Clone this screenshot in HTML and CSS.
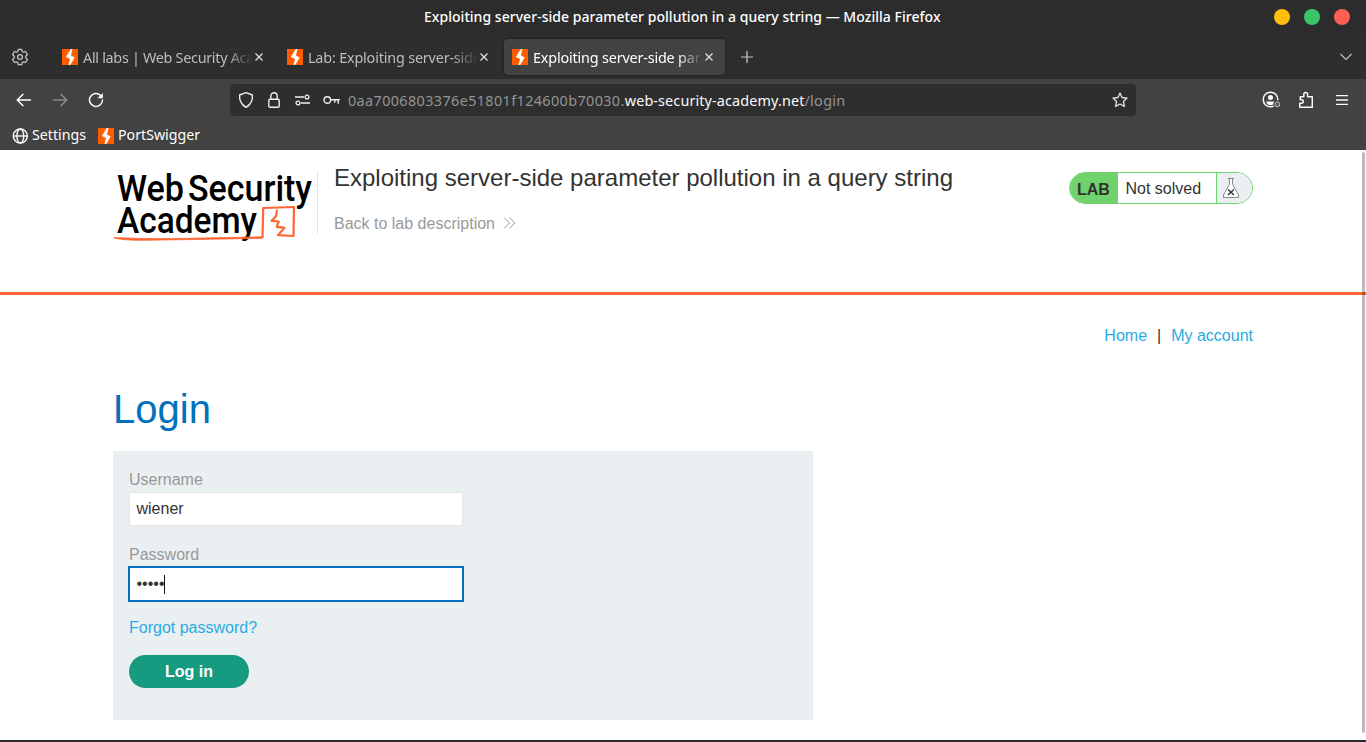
FILE: index.html
```html
<!DOCTYPE html>
<html lang="en">
<head>
<meta charset="utf-8">
<title>Exploiting server-side parameter pollution in a query string</title>
<link rel="stylesheet" href="styles.css">
</head>
<body>
<svg class="defs" width="0" height="0">
  <symbol id="bolt" viewBox="0 0 16 16">
    <rect width="16" height="16" fill="#ff5c00"/>
    <path d="M8.800 0h1.700L9 6.400l3.700 2L8.200 16H6.400l1.700-6L3.800 8z" fill="#fff"/>
  </symbol>
  <symbol id="close" viewBox="0 0 8 8"><path d="M.5.5l7 7M7.500 .5l-7 7" fill="none" stroke="currentColor" stroke-width="1.300"/></symbol>
</svg>

<header class="titlebar">
  <span class="window-title">Exploiting server-side parameter pollution in a query string — Mozilla Firefox</span>
  <div class="window-buttons"><i class="dot yellow"></i><i class="dot green"></i><i class="dot red"></i></div>
</header>

<nav class="tabstrip">
  <svg class="gear" width="18" height="18" viewBox="0 0 18 18" fill="none" stroke="#c4c4c4" stroke-width="1.300" stroke-linejoin="round"><path d="M7.300 1.300h3.400l.5 2.200 1.300.7 2.100-.7 1.800 3-1.600 1.600v1.800l1.600 1.600-1.800 3-2.100-.7-1.300.7-.5 2.200H7.300l-.5-2.200-1.300-.7-2.100.7-1.800-3 1.600-1.600V8.100L1.600 6.500l1.800-3 2.100.7 1.300-.7z"/><circle cx="9" cy="9" r="2.400"/></svg>
  <div class="tab">
    <svg width="16" height="16"><use href="#bolt"/></svg>
    <span class="tab-label tab-one">All labs | Web Security Aca</span>
    <svg class="tab-close" width="8" height="8"><use href="#close"/></svg>
  </div>
  <div class="tab">
    <svg width="16" height="16"><use href="#bolt"/></svg>
    <span class="tab-label">Lab: Exploiting server-side</span>
    <svg class="tab-close" width="8" height="8"><use href="#close"/></svg>
  </div>
  <div class="tab active">
    <svg width="16" height="16"><use href="#bolt"/></svg>
    <span class="tab-label">Exploiting server-side para</span>
    <svg class="tab-close" width="8" height="8"><use href="#close"/></svg>
  </div>
  <svg class="new-tab" width="12" height="12" viewBox="0 0 12 12"><path d="M6 0v12M0 6h12" stroke="#c8c8c8" stroke-width="1.200"/></svg>
  <svg class="all-tabs" width="12" height="8" viewBox="0 0 12 8"><path d="M.5 1 6 6.500 11.500 1" fill="none" stroke="#c0c0c0" stroke-width="1.200"/></svg>
</nav>

<div class="toolbar">
  <svg class="back" width="16" height="14" viewBox="0 0 16 14" fill="none" stroke="#fbfbfb" stroke-width="1.500" stroke-linecap="round"><path d="M1.500 7h13M7 1.300 1.300 7 7 12.700"/></svg>
  <svg class="forward" width="16" height="14" viewBox="0 0 16 14" fill="none" stroke="#8b8b8b" stroke-width="1.500" stroke-linecap="round"><path d="M1.500 7h13M9 1.300 14.700 7 9 12.700"/></svg>
  <svg class="reload" width="16" height="16" viewBox="0 0 16 16"><path d="M12.500 3.200A6.500 6.500 0 1 0 14.500 8" fill="none" stroke="#fbfbfb" stroke-width="1.500" stroke-linecap="round"/><path d="M14.800 1v5.300H9.500z" fill="#fbfbfb"/></svg>
  <div class="urlbar">
    <svg width="16" height="18" viewBox="0 0 16 18" fill="none" stroke="#efefef" stroke-width="1.400" stroke-linejoin="round"><path d="M8 1.600 14.400 4q.7 8-6.400 12.400Q.9 12 1.600 4z"/></svg>
    <svg class="lock" width="12" height="16" viewBox="0 0 12 16" fill="none" stroke="#efefef" stroke-width="1.400"><rect x=".8" y="7.200" width="10.400" height="8" rx="1.300"/><path d="M2.800 7V4a3.200 3.200 0 0 1 6.400 0v3"/></svg>
    <svg width="15" height="12" viewBox="0 0 15 12" fill="none" stroke="#efefef" stroke-width="1.300"><path d="M0 3h9M6 9h9"/><circle cx="12" cy="3" r="1.900"/><circle cx="3" cy="9" r="1.900"/></svg>
    <svg width="17" height="10" viewBox="0 0 17 10" fill="none" stroke="#efefef" stroke-width="1.400"><circle cx="4.300" cy="5" r="3.300"/><path d="M7.600 4.700h9.200M11.800 4.700v3M15.200 4.700v4"/></svg>
    <span class="url"><span class="host-prefix">0aa7006803376e51801f124600b70030.</span><span class="domain">web-security-academy.net</span><span class="path">/login</span></span>
    <svg class="star" width="16" height="16" viewBox="0 0 16 16" fill="none" stroke="#e5e5e5" stroke-width="1.300" stroke-linejoin="round"><path d="M8 1l2 4.500 5 .6-3.600 3.300 1 5L8 12l-4.400 2.400 1-5L1 6.100l5-.6z"/></svg>
  </div>
  <svg class="profile" width="20" height="18" viewBox="0 0 20 18"><circle cx="8.500" cy="8.500" r="7.300" fill="none" stroke="#fbfbfb" stroke-width="1.500"/><circle cx="8.500" cy="6.500" r="2.500" fill="#fbfbfb"/><path d="M4.200 10.500h8.600q-.8 3.700-4.300 3.700t-4.300-3.700z" fill="#fbfbfb"/><circle cx="15.300" cy="13.300" r="4" fill="#424242"/><circle cx="15.300" cy="13.300" r="2.300" fill="#555" stroke="#a8a8a8" stroke-width="1.200"/></svg>
  <svg class="extensions" width="14" height="18" viewBox="0 0 14 18"><path d="M.8 16.300v-4h1.700a1.700 1.700 0 0 0 0-3.600H1.300V5.800h3.500V3.400a1.900 1.900 0 0 1 3.800 0v2.400h4.700v10.500z" fill="none" stroke="#fbfbfb" stroke-width="1.500" stroke-linejoin="round"/></svg>
  <svg class="menu" width="12" height="10" viewBox="0 0 12 10"><path d="M0 .7h12M0 5h12M0 9.300h12" stroke="#fbfbfb" stroke-width="1.300"/></svg>
</div>

<div class="bookmarks">
  <svg width="16" height="16" viewBox="0 0 16 16" fill="none" stroke="#fbfbfb" stroke-width="1.400"><circle cx="8.300" cy="8" r="7"/><ellipse cx="8.300" cy="8" rx="3.400" ry="7"/><path d="M1.300 8h14"/></svg>
  <span class="bm-settings">Settings</span>
  <svg width="16" height="16"><use href="#bolt"/></svg>
  <span class="bm-port">PortSwigger</span>
</div>

<main class="page">
  <div class="scrollbar"></div>
  <section class="lab-header">
    <svg class="logo" width="204" height="77" viewBox="0 0 204 77">
      <g font-family="Roboto, sans-serif" font-weight="500" font-size="37.500" fill="#000">
        <text x="4" y="34.500" textLength="67" lengthAdjust="spacingAndGlyphs">Web</text>
        <text x="75" y="34.500" textLength="124" lengthAdjust="spacingAndGlyphs">Security</text>
        <text x="4" y="67" textLength="140" lengthAdjust="spacingAndGlyphs">Academy</text>
      </g>
      <path d="M1 72q8 2.300 30 2.300L149 72.400V70.800L60 72.600Q30 73 1 71.600z" fill="#ff6633" stroke="#ff6633" stroke-width=".8"/>
      <path d="M149.500 72 150.200 42l30.800-1-.5 29-15.500-.8 6.500-7.400-7.800-1 2-5.300-7-.7 4.500-5 .8-6" fill="none" stroke="#ff6633" stroke-width="2.200" stroke-linejoin="round"/>
    </svg>
    <div class="lab-title">
      <h2>Exploiting server-side parameter pollution in a query string</h2>
      <a class="back-link">Back to lab description <svg width="13" height="12" viewBox="0 0 13 12"><path d="M1 .5 6.500 6 1 11.500M6.500 .5 12 6l-5.500 5.500" fill="none" stroke="#a0a0a0"/></svg></a>
    </div>
    <div class="status">
      <b>LAB</b><span>Not solved</span>
      <div class="flask"><svg width="16" height="20" viewBox="0 0 16 20"><path d="M6 .5h4M6.500 .5V6L.5 17v2.500h15V17L9.500 6V.5" fill="#fff" stroke="#888"/><path d="M5 11.500l6 5.500M11 11.500 5 17" stroke="#333" stroke-width="1.400"/><path d="M5 .5h6" stroke="#888"/></svg></div>
    </div>
  </section>
  <section class="content">
    <div class="links"><a>Home</a><span>|</span><a>My account</a></div>
    <h1>Login</h1>
    <form class="login">
      <label>Username</label>
      <div class="field">wiener</div>
      <label class="second">Password</label>
      <div class="field focused"><span class="mask">•••••</span><i class="caret"></i></div>
      <a class="forgot">Forgot password?</a>
      <button type="button">Log in</button>
    </form>
  </section>
</main>
</body>
</html>
```
FILE: styles.css
```css
* { box-sizing: border-box; }
body {
  margin: 0;
  width: 1366px;
  height: 742px;
  overflow: hidden;
  background: #2b2b2e;
  font-family: "Noto Sans", sans-serif;
  font-size: 14.4px;
}
svg { display: block; flex: none; }
.defs { position: absolute; }

.titlebar {
  height: 35px;
  background: #2c2c2c;
  color: #fff;
  display: grid;
  grid-template-columns: 1fr auto 1fr;
  align-items: center;
}
.window-title {
  grid-column: 2;
  font-weight: 500;
  font-size: 14px;
  letter-spacing: .035px;
  line-height: 20px;
  white-space: nowrap;
  width: 518px;
  padding-bottom: 2px;
}
.window-buttons { display: flex; gap: 14px; justify-content: flex-end; padding: 0 16px 1px 0; }
.dot { width: 16px; height: 16px; border-radius: 50%; }
.yellow { background: #ffbd0a; }
.green { background: #3ac569; }
.red { background: #ff5f52; }

.tabstrip { height: 44px; background: #2e2e2e; display: flex; align-items: center; color: #bdbdbd; }
.gear { margin-left: 11px; margin-right: 25px; }
.tab {
  width: 221px;
  height: 36px;
  margin-right: 4px;
  padding: 0 8px;
  display: flex;
  align-items: center;
  border-radius: 4px;
}
.tab.active { background: #424242; color: #fff; box-shadow: 0 0 3px #151515; }
.tab-label {
  width: 170px;
  margin-left: 5px;
  white-space: nowrap;
  overflow: hidden;
  font-size: 14.4px;
  letter-spacing: -.18px;
  -webkit-mask-image: linear-gradient(to right, #000 144px, transparent 170px);
  mask-image: linear-gradient(to right, #000 144px, transparent 170px);
}
.tab-one { letter-spacing: -.3px; }
.tab-close { margin-left: 2px; color: #e0e0e0; }
.tab:nth-of-type(n + 2) { margin-left: 0; }
.new-tab { margin-left: 12px; }
.all-tabs { margin-left: auto; margin-right: 14px; }

.toolbar { height: 42px; background: #424242; display: flex; align-items: center; }
.back { margin-left: 16px; }
.forward { margin-left: 20px; }
.reload { margin-left: 20px; }
.urlbar {
  width: 906px;
  height: 32px;
  margin-left: 126px;
  padding: 0 8px;
  background: #2e2e2e;
  border-radius: 4px;
  display: flex;
  align-items: center;
  gap: 13px;
}
.urlbar .lock { margin-left: 1px; margin-right: 2px; }
.url { color: #949494; margin-left: -5px; white-space: nowrap; font-size: 14.4px; }
.host-prefix { letter-spacing: .38px; }
.domain { color: #fbfbfb; letter-spacing: .12px; }
.path { letter-spacing: .3px; }
.star { margin-left: auto; }
.profile { margin-left: 126px; }
.extensions { margin-left: 17px; }
.menu { margin-left: 23px; }

.bookmarks { height: 29px; background: #424242; color: #fff; display: flex; align-items: center; padding-left: 12px; }
.bookmarks span { margin-left: 4px; line-height: 20px; font-size: 14.2px; padding-bottom: 2px; }
.bm-settings { width: 62px; flex: none; }
.bookmarks .bm-settings { width: 66px; }

.page {
  height: 590px;
  position: relative;
  background: #fff;
  font-family: "Liberation Sans", Arial, sans-serif;
  font-size: 16px;
  color: #333332;
}
.scrollbar { position: absolute; left: 1362px; top: 2px; width: 3px; height: 581px; border-radius: 2px; background: rgba(0, 0, 0, .27); }
.lab-header { height: 145px; border-bottom: 3px solid #ff6633; padding: 20px 113px 0; display: flex; align-items: flex-start; }
.logo { margin-top: -4px; }
.lab-title { height: 63px; margin: 1px 0 0; padding-left: 16px; border-left: 1px solid #e4e4e4; }
h2 { margin: -7px 0 23px; font-size: 24px; line-height: 28px; font-weight: 400; white-space: nowrap; }
.back-link { display: flex; align-items: center; gap: 8px; color: #999; line-height: 18px; }
.back-link svg { margin-bottom: 2px; }
.status {
  width: 184px;
  height: 32px;
  margin: 2px 0 0 auto;
  border: 1px solid #70d26d;
  border-radius: 16px;
  overflow: hidden;
  display: flex;
  line-height: 31px;
}
.status b { width: 48px; padding-left: 7px; background: #70d26d; line-height: 33px; }
.status span { width: 98px; padding-left: 7.500px; }
.flask { flex: 1; border-left: 1px solid #70d26d; background: #eaeff2; padding: 5px 0 0 6px; }

.content { padding: 0 113px; }
.links { display: flex; justify-content: flex-end; padding-top: 31px; line-height: 20px; }
.links span { margin: 0 10px; }
.links a, .forgot { color: #29abe2; }
h1 { margin: 38px 0 0; font-size: 40px; line-height: 50px; font-weight: 400; color: #0071bc; }
.login { width: 700px; height: 269px; margin-top: 17px; padding: 19px 16px; background: #eaeff2; }
.login label { display: block; line-height: 20px; margin-bottom: 2px; color: #999; }
.login .second { margin-top: 19px; }
.field {
  width: 334px;
  height: 34px;
  border: 1px solid #e4e4e4;
  background: #fff;
  padding: 0 6.500px;
  display: flex;
  align-items: center;
}
.focused { border-color: #fff; outline: 2px solid #0071bc; outline-offset: -1px; }
.caret { width: 1px; height: 19px; margin-left: -1px; background: #111; }
.forgot { display: block; margin-top: 17px; line-height: 20px; }
.login button {
  display: block;
  width: 120px;
  height: 33px;
  margin-top: 17px;
  padding: 0;
  border: 0;
  border-radius: 17px;
  background: #169b80;
  color: #fff;
  font: bold 16px "Liberation Sans", Arial, sans-serif;
}
```
